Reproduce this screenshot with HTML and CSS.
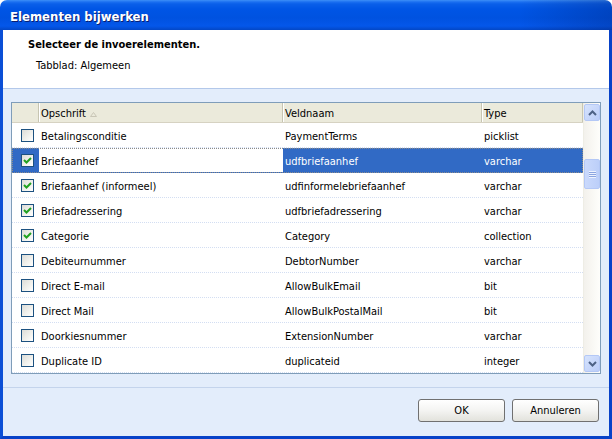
FILE: index.html
```html
<!DOCTYPE html>
<html>
<head>
<meta charset="utf-8">
<title>Elementen bijwerken</title>
<link rel="stylesheet" href="styles.css">
</head>
<body>
<div class="window">
  <div class="titlebar"><span class="title">Elementen bijwerken</span></div>
  <div class="frame">
    <div class="intro">
      <div class="intro-title">Selecteer de invoerelementen.</div>
      <div class="intro-sub">Tabblad: Algemeen</div>
    </div>
    <div class="main">
      <div class="listview">
        <div class="list">
          <div class="row head">
            <div class="hcell"></div>
            <div class="hcell">Opschrift<svg class="sort" width="7" height="5" viewBox="0 0 7 5"><path d="M0.5 4.5 L3.5 0.5 L6.5 4.5 Z" fill="none" stroke="#c9c6b6" stroke-width="1"/></svg></div>
            <div class="hcell">Veldnaam</div>
            <div class="hcell">Type</div>
          </div>
          <div class="rows">
            <div class="row">
              <div class="cell chk"><span class="checkbox"></span></div>
              <div class="cell">Betalingsconditie</div>
              <div class="cell">PaymentTerms</div>
              <div class="cell">picklist</div>
            </div>
            <div class="row selected">
              <div class="cell chk"><span class="checkbox on"><svg width="11" height="11" viewBox="0 0 11 11"><path d="M2 5 L4.5 7.5 L9 3" fill="none" stroke="#21a121" stroke-width="2"/></svg></span></div>
              <div class="cell edit">Briefaanhef</div>
              <div class="cell">udfbriefaanhef</div>
              <div class="cell">varchar</div>
            </div>
            <div class="row">
              <div class="cell chk"><span class="checkbox on"><svg width="11" height="11" viewBox="0 0 11 11"><path d="M2 5 L4.5 7.5 L9 3" fill="none" stroke="#21a121" stroke-width="2"/></svg></span></div>
              <div class="cell">Briefaanhef (informeel)</div>
              <div class="cell">udfinformelebriefaanhef</div>
              <div class="cell">varchar</div>
            </div>
            <div class="row">
              <div class="cell chk"><span class="checkbox on"><svg width="11" height="11" viewBox="0 0 11 11"><path d="M2 5 L4.5 7.5 L9 3" fill="none" stroke="#21a121" stroke-width="2"/></svg></span></div>
              <div class="cell">Briefadressering</div>
              <div class="cell">udfbriefadressering</div>
              <div class="cell">varchar</div>
            </div>
            <div class="row">
              <div class="cell chk"><span class="checkbox on"><svg width="11" height="11" viewBox="0 0 11 11"><path d="M2 5 L4.5 7.5 L9 3" fill="none" stroke="#21a121" stroke-width="2"/></svg></span></div>
              <div class="cell">Categorie</div>
              <div class="cell">Category</div>
              <div class="cell">collection</div>
            </div>
            <div class="row">
              <div class="cell chk"><span class="checkbox"></span></div>
              <div class="cell">Debiteurnummer</div>
              <div class="cell">DebtorNumber</div>
              <div class="cell">varchar</div>
            </div>
            <div class="row">
              <div class="cell chk"><span class="checkbox"></span></div>
              <div class="cell">Direct E-mail</div>
              <div class="cell">AllowBulkEmail</div>
              <div class="cell">bit</div>
            </div>
            <div class="row">
              <div class="cell chk"><span class="checkbox"></span></div>
              <div class="cell">Direct Mail</div>
              <div class="cell">AllowBulkPostalMail</div>
              <div class="cell">bit</div>
            </div>
            <div class="row">
              <div class="cell chk"><span class="checkbox"></span></div>
              <div class="cell">Doorkiesnummer</div>
              <div class="cell">ExtensionNumber</div>
              <div class="cell">varchar</div>
            </div>
            <div class="row">
              <div class="cell chk"><span class="checkbox"></span></div>
              <div class="cell">Duplicate ID</div>
              <div class="cell">duplicateid</div>
              <div class="cell">integer</div>
            </div>
          </div>
        </div>
        <div class="scrollbar">
          <div class="sb-btn"><svg width="9" height="6" viewBox="0 0 9 6"><path d="M1 5 L4.5 1.5 L8 5" fill="none" stroke="#4d6185" stroke-width="2"/></svg></div>
          <div class="sb-track"><div class="sb-thumb"><span class="grip"></span></div></div>
          <div class="sb-btn"><svg width="9" height="6" viewBox="0 0 9 6"><path d="M1 1 L4.5 4.5 L8 1" fill="none" stroke="#4d6185" stroke-width="2"/></svg></div>
        </div>
      </div>
    </div>
    <div class="footer">
      <button class="btn">OK</button>
      <button class="btn">Annuleren</button>
    </div>
  </div>
</div>
</body>
</html>
```
FILE: styles.css
```css
* { box-sizing: border-box; }
html, body { margin: 0; padding: 0; background: #ffffff; }
body {
  font-family: "DejaVu Sans Condensed", "DejaVu Sans", sans-serif;
  font-size: 11px;
  color: #000;
}
.window {
  width: 612px;
  height: 439px;
  display: flex;
  flex-direction: column;
}
.titlebar {
  height: 30px;
  flex: none;
  border-radius: 7px 7px 0 0;
  background:
    linear-gradient(to right, rgba(0,0,0,0) 0, rgba(0,0,0,0) 85%, rgba(0,20,90,0.25) 100%),
    linear-gradient(to bottom, #3d8ff7 0, #1b6ff0 2px, #0a5fe9 4px, #0055e5 9px, #0052e0 18px, #0457ea 26px, #0347c6 30px);
  display: flex;
  align-items: center;
  padding-left: 10px;
}
.title {
  color: #fff;
  font-weight: bold;
  font-size: 13px;
  text-shadow: 1px 1px 0 #0a1e70;
  margin-top: 2px;
}
.frame {
  flex: 1;
  display: flex;
  flex-direction: column;
  border-left: 3px solid #0b4fd6;
  border-right: 3px solid #0842c8;
  border-bottom: 3px solid #0842c8;
}
.intro {
  background: #fff;
  height: 59px;
  border-bottom: 1px solid #b3c8ea;
  padding: 8px 0 0 25px;
}
.intro-title {
  font-weight: bold;
  line-height: 14px;
}
.intro-sub {
  margin: 7px 0 0 8px;
  line-height: 14px;
}
.main {
  background: #e3edfb;
  padding: 13px 8px;
}
.listview {
  height: 272px;
  border: 1px solid #7f9db9;
  background: #fff;
  display: flex;
  overflow: hidden;
}
.list {
  width: 571px;
  display: flex;
  flex-direction: column;
}
.row {
  display: grid;
  grid-template-columns: 27px 244px 199px 101px;
  height: 25px;
  align-items: center;
  border-bottom: 1px dotted #d3def2;
}
.row.head {
  height: 22px;
  background: #ebeadb;
  border-bottom: 1px solid #d6d2c2;
}
.hcell {
  height: 100%;
  display: flex;
  align-items: center;
  padding: 2px 0 0 2px;
  border-right: 1px solid #c7c5b2;
  box-shadow: inset 1px 0 0 #fff;
}
.hcell:first-child { box-shadow: none; }
.sort { margin-left: 4px; margin-top: 1px; }
.rows { flex: 1; }
.cell {
  height: 100%;
  display: flex;
  align-items: center;
  padding: 2px 0 0 2px;
  white-space: nowrap;
}
.cell.chk { padding: 0 0 0 9px; }
.row.selected {
  background: #316ac5;
  color: #fff;
  outline: 1px dotted #8c8c8c;
  outline-offset: -1px;
}
.row.selected .cell.edit {
  background: #fff;
  color: #000;
}
.checkbox {
  width: 13px;
  height: 13px;
  border: 1px solid #1c5180;
  background: linear-gradient(135deg, #dcdcd7 0%, #f2f2ee 60%, #ffffff 100%);
  display: flex;
  align-items: center;
  justify-content: center;
}
.scrollbar {
  width: 17px;
  display: flex;
  flex-direction: column;
  background: linear-gradient(to right, #f3f1ec, #fefefb);
  border-left: 1px solid #eeede5;
}
.sb-btn {
  height: 17px;
  margin: 1px 0;
  border: 1px solid #b4c8f6;
  border-radius: 2px;
  background: linear-gradient(to bottom right, #d6e3fd, #bbcdf8);
  display: flex;
  align-items: center;
  justify-content: center;
}
.sb-track {
  flex: 1;
  padding-top: 37px;
}
.sb-thumb {
  height: 30px;
  border: 1px solid #b4c8f6;
  border-radius: 2px;
  background: linear-gradient(to right, #cad9fc, #bccff9);
  display: flex;
  align-items: center;
  justify-content: center;
}
.grip {
  width: 7px;
  height: 7px;
  background: repeating-linear-gradient(to bottom, #eef3fe 0, #eef3fe 1px, #8ca5e0 1px, #8ca5e0 2px);
}
.footer {
  flex: 1;
  background: #e3edfb;
  border-top: 1px solid #c4d4ec;
  display: flex;
  justify-content: flex-end;
  align-items: flex-start;
  gap: 7px;
  padding: 11px 10px 0 0;
}
.btn {
  width: 87px;
  height: 23px;
  font-family: inherit;
  font-size: 11px;
  color: #000;
  border: 1px solid #707070;
  border-radius: 3px;
  background: linear-gradient(to bottom, #ffffff 0%, #f4f4f2 50%, #e2e2dc 100%);
  padding: 0;
}
```
